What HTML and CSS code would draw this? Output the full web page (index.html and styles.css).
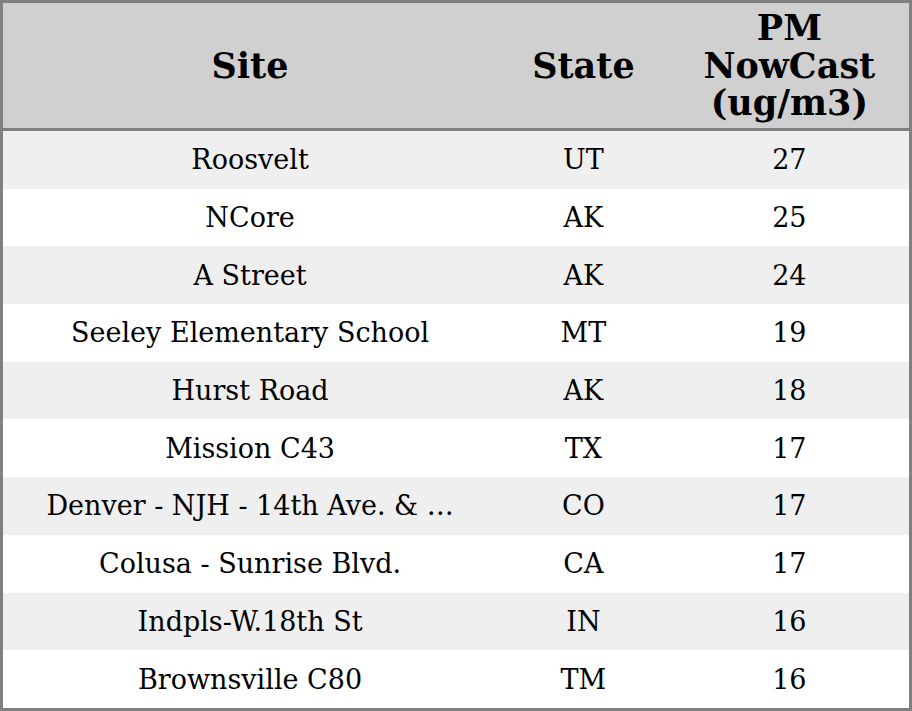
FILE: index.html
```html
<!DOCTYPE html>
<html>
<head>
<meta charset="utf-8">
<link rel="stylesheet" href="styles.css">
</head>
<body>
<table class="aq">
<colgroup><col class="c-site"><col class="c-state"><col class="c-pm"></colgroup>
<thead>
<tr><th>Site</th><th>State</th><th>PM<br>NowCast<br>(ug/m3)</th></tr>
</thead>
<tbody>
<tr><td>Roosvelt</td><td>UT</td><td>27</td></tr>
<tr><td>NCore</td><td>AK</td><td>25</td></tr>
<tr><td>A Street</td><td>AK</td><td>24</td></tr>
<tr><td>Seeley Elementary School</td><td>MT</td><td>19</td></tr>
<tr><td>Hurst Road</td><td>AK</td><td>18</td></tr>
<tr><td>Mission C43</td><td>TX</td><td>17</td></tr>
<tr><td>Denver - NJH - 14th Ave. &amp; …</td><td>CO</td><td>17</td></tr>
<tr><td>Colusa - Sunrise Blvd.</td><td>CA</td><td>17</td></tr>
<tr><td>Indpls-W.18th St</td><td>IN</td><td>16</td></tr>
<tr><td>Brownsville C80</td><td>TM</td><td>16</td></tr>
</tbody>
</table>
</body>
</html>
```
FILE: styles.css
```css
html, body {
  margin: 0;
  padding: 0;
  height: 100%;
  background: #ffffff;
}
.aq {
  width: 912px;
  height: 711px;
  border-collapse: collapse;
  table-layout: fixed;
  border: 3px solid #808080;
  font-family: "DejaVu Serif", serif;
  color: #000;
}
.c-site { width: 494px; }
.c-state { width: 172px; }
.c-pm { width: 240px; }
.aq th {
  background: #d0d0d0;
  font-size: 35px;
  font-weight: bold;
  line-height: 37.5px;
  height: 125px;
  padding: 0;
  text-align: center;
  vertical-align: middle;
  border-bottom: 3px solid #808080;
}
.aq td {
  font-size: 27px;
  text-align: center;
  vertical-align: middle;
  padding: 0;
  height: 57px;
  white-space: nowrap;
}
.aq tbody tr:nth-child(odd) td {
  background: #efefef;
}
```
